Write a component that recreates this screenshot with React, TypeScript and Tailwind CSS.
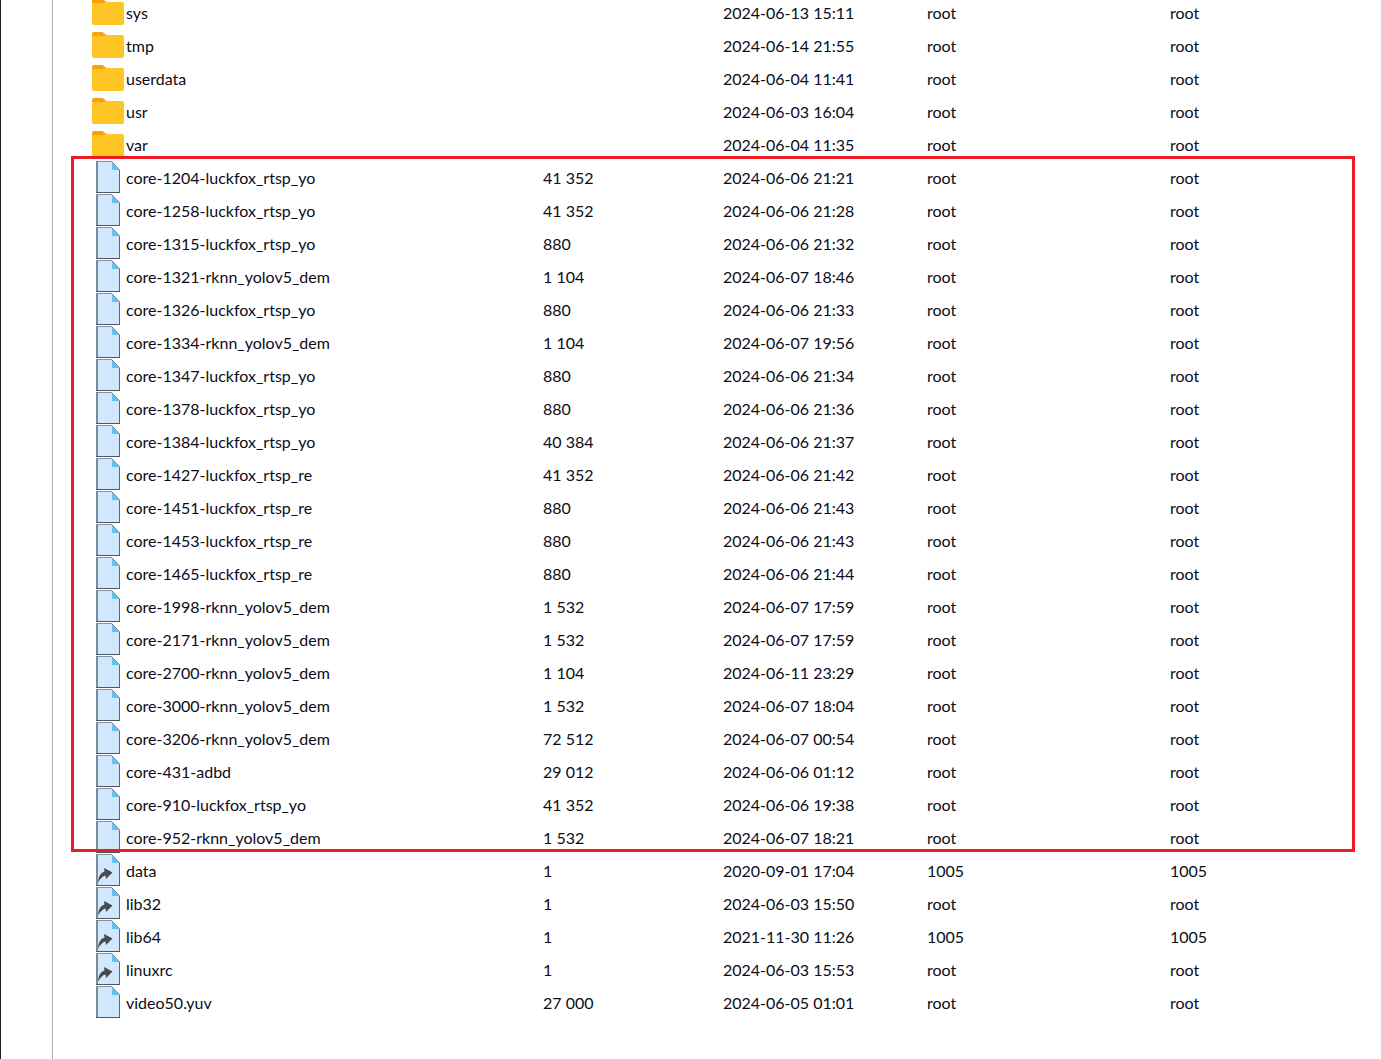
const rows: [string, string, string, string, string, string][] = [
  ["folder", "sys", "", "2024-06-13 15:11", "root", "root"],
  ["folder", "tmp", "", "2024-06-14 21:55", "root", "root"],
  ["folder", "userdata", "", "2024-06-04 11:41", "root", "root"],
  ["folder", "usr", "", "2024-06-03 16:04", "root", "root"],
  ["folder", "var", "", "2024-06-04 11:35", "root", "root"],
  ["file", "core-1204-luckfox_rtsp_yo", "41 352", "2024-06-06 21:21", "root", "root"],
  ["file", "core-1258-luckfox_rtsp_yo", "41 352", "2024-06-06 21:28", "root", "root"],
  ["file", "core-1315-luckfox_rtsp_yo", "880", "2024-06-06 21:32", "root", "root"],
  ["file", "core-1321-rknn_yolov5_dem", "1 104", "2024-06-07 18:46", "root", "root"],
  ["file", "core-1326-luckfox_rtsp_yo", "880", "2024-06-06 21:33", "root", "root"],
  ["file", "core-1334-rknn_yolov5_dem", "1 104", "2024-06-07 19:56", "root", "root"],
  ["file", "core-1347-luckfox_rtsp_yo", "880", "2024-06-06 21:34", "root", "root"],
  ["file", "core-1378-luckfox_rtsp_yo", "880", "2024-06-06 21:36", "root", "root"],
  ["file", "core-1384-luckfox_rtsp_yo", "40 384", "2024-06-06 21:37", "root", "root"],
  ["file", "core-1427-luckfox_rtsp_re", "41 352", "2024-06-06 21:42", "root", "root"],
  ["file", "core-1451-luckfox_rtsp_re", "880", "2024-06-06 21:43", "root", "root"],
  ["file", "core-1453-luckfox_rtsp_re", "880", "2024-06-06 21:43", "root", "root"],
  ["file", "core-1465-luckfox_rtsp_re", "880", "2024-06-06 21:44", "root", "root"],
  ["file", "core-1998-rknn_yolov5_dem", "1 532", "2024-06-07 17:59", "root", "root"],
  ["file", "core-2171-rknn_yolov5_dem", "1 532", "2024-06-07 17:59", "root", "root"],
  ["file", "core-2700-rknn_yolov5_dem", "1 104", "2024-06-11 23:29", "root", "root"],
  ["file", "core-3000-rknn_yolov5_dem", "1 532", "2024-06-07 18:04", "root", "root"],
  ["file", "core-3206-rknn_yolov5_dem", "72 512", "2024-06-07 00:54", "root", "root"],
  ["file", "core-431-adbd", "29 012", "2024-06-06 01:12", "root", "root"],
  ["file", "core-910-luckfox_rtsp_yo", "41 352", "2024-06-06 19:38", "root", "root"],
  ["file", "core-952-rknn_yolov5_dem", "1 532", "2024-06-07 18:21", "root", "root"],
  ["link", "data", "1", "2020-09-01 17:04", "1005", "1005"],
  ["link", "lib32", "1", "2024-06-03 15:50", "root", "root"],
  ["link", "lib64", "1", "2021-11-30 11:26", "1005", "1005"],
  ["link", "linuxrc", "1", "2024-06-03 15:53", "root", "root"],
  ["file", "video50.yuv", "27 000", "2024-06-05 01:01", "root", "root"],
];

function FolderIcon() {
  return (
    <svg width="32" height="26" viewBox="0 0 32 26" className="mt-[3px]">
      <path d="M0 2a2 2 0 0 1 2-2h8.500l4 3H16v3H0z" fill="#fb9f0c" />
      <path d="M0 4h10.500l3.500-1h16a2 2 0 0 1 2 2v19a2 2 0 0 1-2 2H2a2 2 0 0 1-2-2z" fill="#fec625" />
    </svg>
  );
}

function FileIcon({ link }: { link?: boolean }) {
  return (
    <svg width="24" height="33" viewBox="0 0 24 33" className="ml-1">
      <path d="M1 .500H15.500L23.500 9V31.500H1z" fill="#cfe8fd" />
      <path d="M16 2v7h7z" fill="#5cc3f7" />
      <path d="M15.500 .500L23.500 9V31.500" fill="none" stroke="#5d6872" />
      <path d="M.500 .500H15.500" stroke="#5d6872" strokeOpacity=".7" />
      <path d="M1 0V32" stroke="#7f8a93" strokeWidth="2" />
      <path d="M0 31.500H24" stroke="#4c5661" />
      {link && (
        <path d="M2 28.500C2.500 23 4 19 8.500 17.500L8 14l8.500 4.500L10 25l-.5-3.500C6.500 22 4 25 2 28.500z" fill="#4a4a4a" />
      )}
    </svg>
  );
}

export default function App() {
  return (
    <div className="relative flex h-screen overflow-hidden bg-white font-['Lato',sans-serif] text-[16px] text-[#0c0c18]">
      <div className="w-[53px] shrink-0 border-l border-l-[#1d1f24] border-r border-r-[#b4b4b4]" />
      <div className="-mt-1 flex-1">
        {rows.map((row) => (
          <div key={row[1]} className="flex h-[33px]">
            <div className="ml-[39px] w-[34px] shrink-0">
              {row[0] === "folder" ? <FolderIcon /> : <FileIcon link={row[0] === "link"} />}
            </div>
            <div className="grid flex-1 grid-cols-[417px_180px_204px_243px_1fr] items-center leading-[33px] whitespace-nowrap pb-px">
              <span>{row[1]}</span>
              <span>{row[2]}</span>
              <span>{row[3]}</span>
              <span>{row[4]}</span>
              <span>{row[5]}</span>
            </div>
          </div>
        ))}
      </div>
      <div className="absolute top-[156px] left-[71px] h-[696px] w-[1284px] border-[3px] border-[#ed1c24]" />
    </div>
  );
}
